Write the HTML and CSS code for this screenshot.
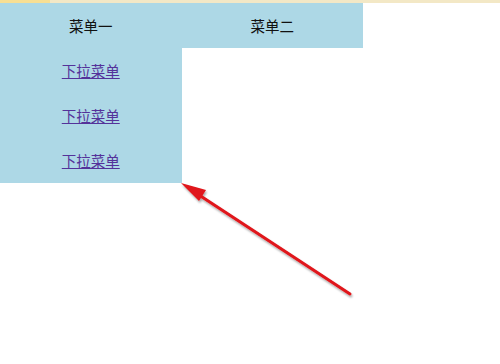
FILE: index.html
```html
<!DOCTYPE html>
<html lang="zh">
<head>
<meta charset="utf-8">
<title>菜单</title>
<link rel="stylesheet" href="styles.css">
</head>
<body>
<div class="topstrip"><span class="tab"></span></div>
<ul class="nav">
  <li class="item">
    <span class="label">菜单一</span>
    <ul class="dropdown">
      <li><a href="#a">下拉菜单</a></li>
      <li><a href="#b">下拉菜单</a></li>
      <li><a href="#c">下拉菜单</a></li>
    </ul>
  </li>
  <li class="item"><span class="label">菜单二</span></li>
</ul>
<svg class="arrow" width="500" height="364" viewBox="0 0 500 364" aria-hidden="true">
  <defs>
    <filter id="sh" x="-20%" y="-20%" width="140%" height="140%">
      <feGaussianBlur in="SourceAlpha" stdDeviation="1.2"/>
      <feOffset dx="1" dy="1.5" result="b"/>
      <feComponentTransfer><feFuncA type="linear" slope="0.35"/></feComponentTransfer>
      <feMerge><feMergeNode/><feMergeNode in="SourceGraphic"/></feMerge>
    </filter>
  </defs>
  <g filter="url(#sh)">
    <line x1="350" y1="294" x2="196" y2="193" stroke="#e0141a" stroke-width="3" stroke-linecap="round"/>
    <polygon points="181,183 206,190 199,201" fill="#e0141a"/>
  </g>
</svg>
</body>
</html>
```
FILE: styles.css
```css
html, body {
  margin: 0;
  padding: 0;
  background: #ffffff;
  width: 500px;
  height: 364px;
  overflow: hidden;
  font-family: "Noto Sans CJK SC", "DejaVu Sans", sans-serif;
}
.topstrip {
  height: 3px;
  background: #f3e8c6;
  display: flex;
}
.tab {
  width: 50px;
  background: #f8df93;
}
.nav {
  list-style: none;
  margin: 0;
  padding: 0;
  display: flex;
  width: 363px;
  background: #add8e6;
}
.item {
  flex: 1;
  position: relative;
  text-align: center;
}
.label {
  display: block;
  height: 45px;
  line-height: 45px;
  font-size: 14.5px;
  color: #111;
}
.dropdown {
  list-style: none;
  margin: 0;
  padding: 0;
  position: absolute;
  top: 45px;
  left: 0;
  width: 100%;
  background: #add8e6;
}
.dropdown li {
  height: 45px;
  line-height: 45px;
}
.dropdown a {
  font-size: 14.5px;
  color: #54329a;
  text-decoration: underline;
}
.arrow {
  position: absolute;
  left: 0;
  top: 0;
  pointer-events: none;
}
```
